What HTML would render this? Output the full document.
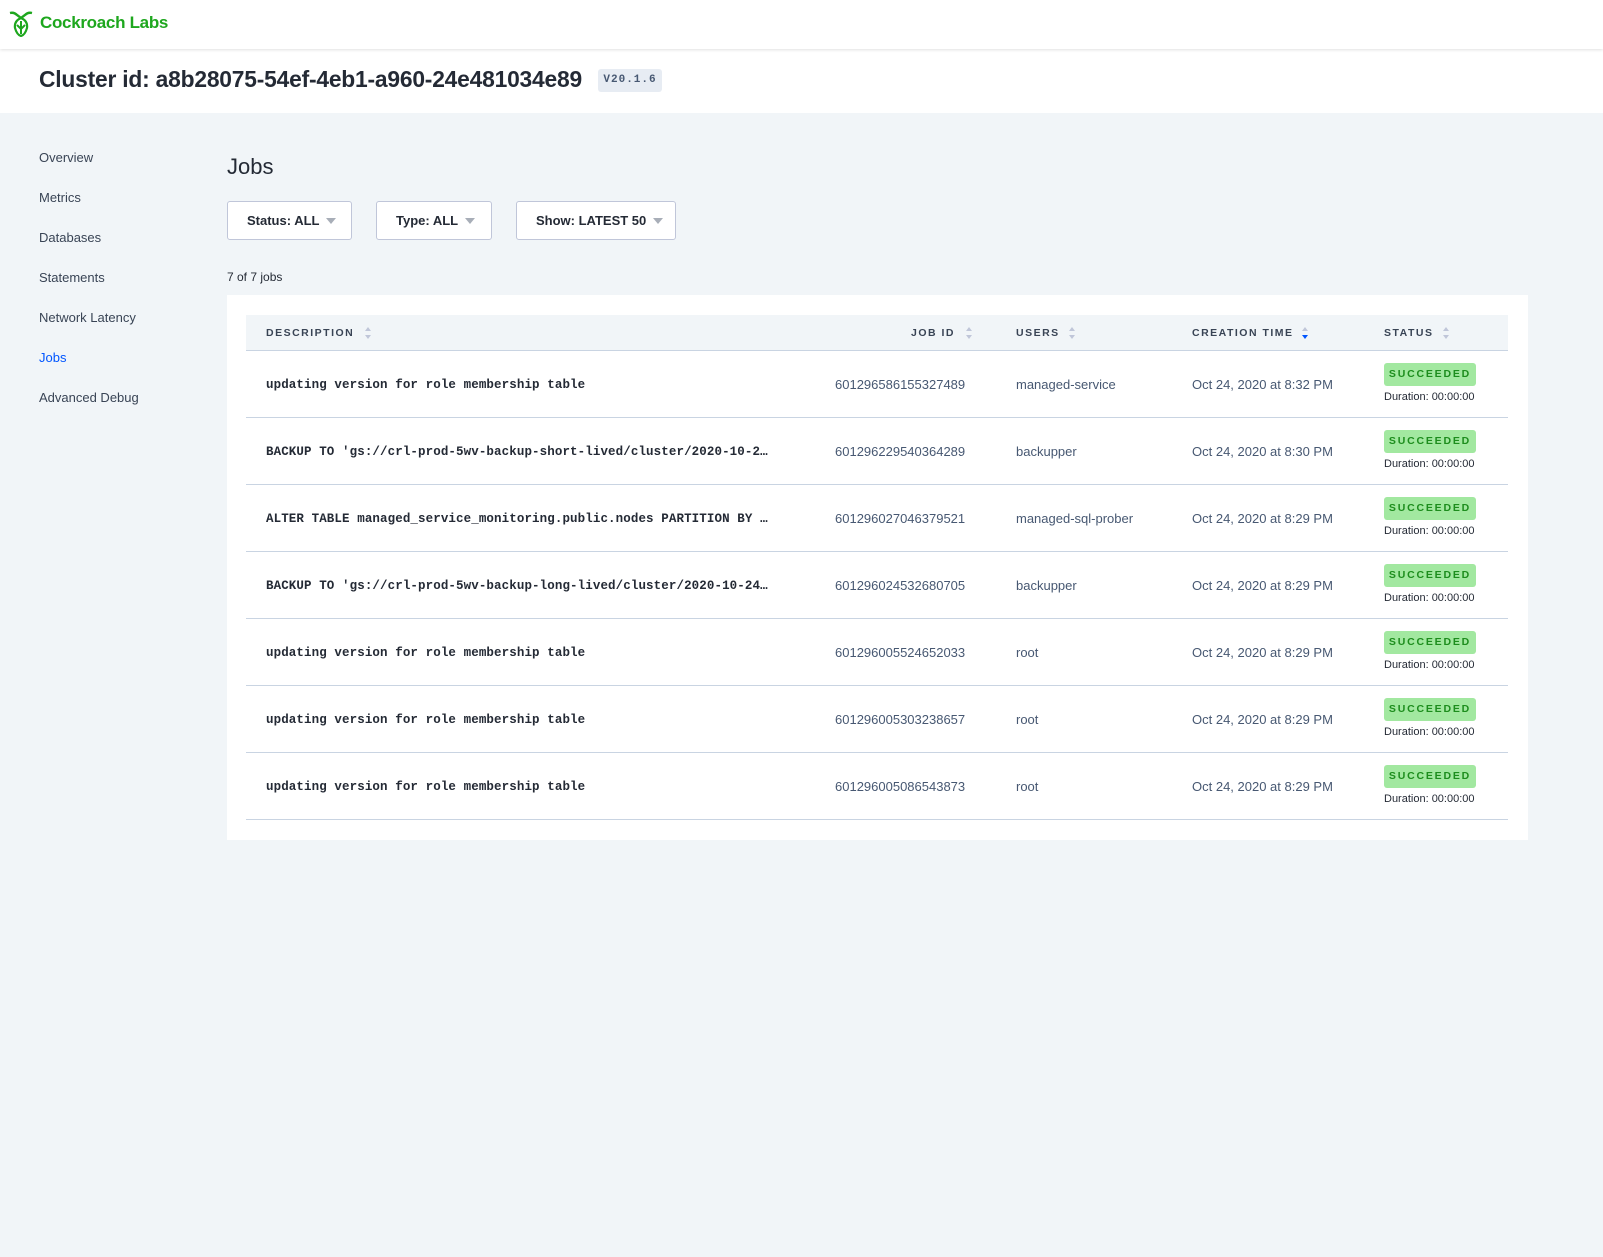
<!DOCTYPE html>
<html><head><meta charset="utf-8"><style>
*{box-sizing:border-box;margin:0;padding:0}
body{width:1603px;height:1257px;background:#f1f5f8;font-family:"Liberation Sans",sans-serif;color:#242a35;position:relative;overflow:hidden}
.hdr{position:absolute;left:0;top:0;width:1603px;height:49px;background:#fff;box-shadow:0 1px 3px rgba(0,0,0,.12);z-index:2}
.logo{position:absolute;left:8px;top:9px;display:flex;align-items:center;color:#1ea71e;font-weight:bold;font-size:17px;letter-spacing:-0.3px}
.band{position:absolute;left:0;top:49px;width:1603px;height:64px;background:#fff}
.band h1{position:absolute;left:39px;top:17px;font-size:22.8px;font-weight:bold;letter-spacing:-0.2px;color:#242a35}
.ver{position:absolute;left:598px;top:20px;width:64px;height:23px;background:#e7ecf3;border-radius:3px;font-family:"Liberation Mono",monospace;font-size:11px;font-weight:bold;color:#475872;text-align:center;line-height:23px;letter-spacing:1px}
.nav{position:absolute;left:39px;top:149px;font-size:13px;color:#394455}
.nav div{height:40px;line-height:18px}
.nav .act{color:#0055ff}
.title{position:absolute;left:227px;top:154px;font-size:22px;color:#242a35}
.dd{position:absolute;top:201px;height:39px;background:#fff;border:1px solid #c0c6d9;border-radius:3px;font-size:13px;font-weight:bold;color:#242a35;line-height:37px;padding-left:19px}
.dd i{display:inline-block;width:0;height:0;border-left:5px solid transparent;border-right:5px solid transparent;border-top:6px solid #a8aeb8;margin-left:7px;vertical-align:1px}
.cnt{position:absolute;left:227px;top:270px;font-size:12px;color:#242a35}
.card{position:absolute;left:227px;top:295px;width:1301px;height:545px;background:#fff}
.th{position:absolute;left:19px;top:20px;width:1262px;height:36px;background:#f1f5f8;border-bottom:1px solid #c9d4e2}
.th span{position:absolute;top:12px;font-size:10.5px;font-weight:bold;letter-spacing:1.5px;color:#394455}
.arr{position:absolute;top:10px;width:6px;height:16px}
.row{position:absolute;left:19px;width:1262px;height:67px;border-bottom:1px solid #c9d4e2}
.row .d{position:absolute;left:20px;top:27px;font-family:"Liberation Mono",monospace;font-size:12.5px;letter-spacing:0.1px;font-weight:bold;color:#242a35;white-space:nowrap}
.row .c{position:absolute;top:26px;font-size:13px;color:#475872}
.badge{position:absolute;left:1138px;top:12px;width:92px;height:23px;background:#a2e8a0;border-radius:3px;color:#1d8d1d;font-size:10.5px;font-weight:bold;letter-spacing:1.8px;text-align:center;line-height:23px}
.dur{position:absolute;left:1138px;top:40px;font-size:11px;color:#242a35}
</style></head><body>
<div class="hdr"><div class="logo"><svg width="26" height="28" viewBox="0 0 26 28"><path d="M2 4 Q6 3 9 6 L13 9 L17 6 Q20 3 24 4" fill="none" stroke="#1ea71e" stroke-width="2.4"/><path d="M13 9 Q6 12 7 19 Q9 26 13 27 Q17 26 19 19 Q20 12 13 9Z" fill="none" stroke="#1ea71e" stroke-width="2.2"/><path d="M13 12 L13 25 M9 16 L13 20 L17 16" fill="none" stroke="#1ea71e" stroke-width="2"/></svg><span style="margin-left:6px">Cockroach Labs</span></div></div>
<div class="band"><h1>Cluster id: a8b28075-54ef-4eb1-a960-24e481034e89</h1><div class="ver">V20.1.6</div></div>
<div class="nav"><div>Overview</div><div>Metrics</div><div>Databases</div><div>Statements</div><div>Network Latency</div><div class="act">Jobs</div><div>Advanced Debug</div></div>
<div class="title">Jobs</div>
<div class="dd" style="left:227px;width:125px">Status: ALL<i></i></div>
<div class="dd" style="left:376px;width:116px">Type: ALL<i></i></div>
<div class="dd" style="left:516px;width:160px">Show: LATEST 50<i></i></div>
<div class="cnt">7 of 7 jobs</div>
<div class="card">
<div class="th">
<span style="left:20px">DESCRIPTION</span><svg class="arr" style="left:119px" viewBox="0 0 6 16"><path d="M0 6L3 2L6 6Z M0 10L3 14L6 10Z" fill="#c0c6d9"/></svg>
<span style="left:665px">JOB ID</span><svg class="arr" style="left:720px" viewBox="0 0 6 16"><path d="M0 6L3 2L6 6Z M0 10L3 14L6 10Z" fill="#c0c6d9"/></svg>
<span style="left:770px">USERS</span><svg class="arr" style="left:823px" viewBox="0 0 6 16"><path d="M0 6L3 2L6 6Z M0 10L3 14L6 10Z" fill="#c0c6d9"/></svg>
<span style="left:946px">CREATION TIME</span><svg class="arr" style="left:1056px" viewBox="0 0 6 16"><path d="M0 6L3 2L6 6Z" fill="#c0c6d9"/><path d="M0 10L3 14L6 10Z" fill="#0055ff"/></svg>
<span style="left:1138px">STATUS</span><svg class="arr" style="left:1197px" viewBox="0 0 6 16"><path d="M0 6L3 2L6 6Z M0 10L3 14L6 10Z" fill="#c0c6d9"/></svg>
</div>
<div class="row" style="top:56px"><div class="d">updating version for role membership table</div><div class="c" style="left:589px">601296586155327489</div><div class="c" style="left:770px">managed-service</div><div class="c" style="left:946px">Oct 24, 2020 at 8:32 PM</div><div class="badge">SUCCEEDED</div><div class="dur">Duration: 00:00:00</div></div>
<div class="row" style="top:123px"><div class="d">BACKUP TO 'gs://crl-prod-5wv-backup-short-lived/cluster/2020-10-2…</div><div class="c" style="left:589px">601296229540364289</div><div class="c" style="left:770px">backupper</div><div class="c" style="left:946px">Oct 24, 2020 at 8:30 PM</div><div class="badge">SUCCEEDED</div><div class="dur">Duration: 00:00:00</div></div>
<div class="row" style="top:190px"><div class="d">ALTER TABLE managed_service_monitoring.public.nodes PARTITION BY …</div><div class="c" style="left:589px">601296027046379521</div><div class="c" style="left:770px">managed-sql-prober</div><div class="c" style="left:946px">Oct 24, 2020 at 8:29 PM</div><div class="badge">SUCCEEDED</div><div class="dur">Duration: 00:00:00</div></div>
<div class="row" style="top:257px"><div class="d">BACKUP TO 'gs://crl-prod-5wv-backup-long-lived/cluster/2020-10-24…</div><div class="c" style="left:589px">601296024532680705</div><div class="c" style="left:770px">backupper</div><div class="c" style="left:946px">Oct 24, 2020 at 8:29 PM</div><div class="badge">SUCCEEDED</div><div class="dur">Duration: 00:00:00</div></div>
<div class="row" style="top:324px"><div class="d">updating version for role membership table</div><div class="c" style="left:589px">601296005524652033</div><div class="c" style="left:770px">root</div><div class="c" style="left:946px">Oct 24, 2020 at 8:29 PM</div><div class="badge">SUCCEEDED</div><div class="dur">Duration: 00:00:00</div></div>
<div class="row" style="top:391px"><div class="d">updating version for role membership table</div><div class="c" style="left:589px">601296005303238657</div><div class="c" style="left:770px">root</div><div class="c" style="left:946px">Oct 24, 2020 at 8:29 PM</div><div class="badge">SUCCEEDED</div><div class="dur">Duration: 00:00:00</div></div>
<div class="row" style="top:458px"><div class="d">updating version for role membership table</div><div class="c" style="left:589px">601296005086543873</div><div class="c" style="left:770px">root</div><div class="c" style="left:946px">Oct 24, 2020 at 8:29 PM</div><div class="badge">SUCCEEDED</div><div class="dur">Duration: 00:00:00</div></div>
</div>
</body></html>
